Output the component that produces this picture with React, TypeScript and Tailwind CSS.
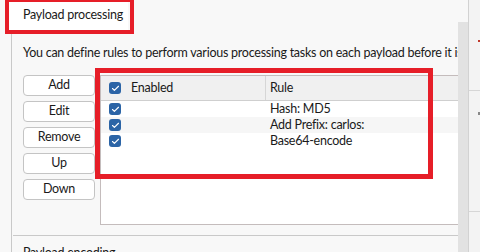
import { Check } from 'lucide-react';

const rules = ['Hash: MD5', 'Add Prefix: carlos:', 'Base64-encode'];
const actions = ['Add', 'Edit', 'Remove', 'Up', 'Down'];

function Box() {
  return (
    <span className="w-[12px] h-[12px] rounded-[3px] bg-[#2b64a6] flex items-center justify-center">
      <Check className="w-[9px] h-[9px] text-white" strokeWidth={3} />
    </span>
  );
}

export default function App() {
  return (
    <div
      className="relative w-[480px] h-[252px] overflow-hidden bg-[#f8f8f8] text-[12.5px] tracking-[-0.25px] text-[#1a1a1a]"
      style={{ fontFamily: 'Lato, "Open Sans", sans-serif' }}
    >
      <div className="flex h-full">
        {/* main settings pane */}
        <div className="w-[458px] flex flex-col overflow-hidden">
          <div className="h-[30px] ml-[9px] w-[119px] bg-white flex items-center pl-[14px] shrink-0 whitespace-nowrap">
            Payload processing
          </div>
          <div className="ml-[11px] border-l border-[#c9c9c9] flex-1 flex flex-col">
            <p className="pl-[11px] mt-[14px] leading-[18px] whitespace-nowrap">
              You can define rules to perform various processing tasks on each payload before it is used.
            </p>
            <div className="flex gap-[5px] pl-[11px] mt-[13px]">
              <div className="w-[72px] flex flex-col gap-[5px] shrink-0">
                {actions.map((a) => (
                  <button
                    key={a}
                    className="h-[21px] rounded-[4px] border border-[#c4c4c4] bg-white leading-none"
                  >
                    {a}
                  </button>
                ))}
              </div>
              <div className="w-[400px] h-[150px] border border-[#c4bcbc] bg-white shrink-0">
                <div className="h-[25px] flex bg-[#f0f0f0] border-b border-[#cfcfcf]">
                  <div className="w-[165px] flex items-center gap-[10px] pl-[8px] border-r border-[#d6d6d6]">
                    <Box />
                    <span>Enabled</span>
                  </div>
                  <div className="flex items-center pl-[4px]">Rule</div>
                </div>
                {rules.map((r, i) => (
                  <div
                    key={r}
                    className={`h-[16px] flex items-center leading-[16px] ${i % 2 === 1 ? 'bg-[#f6f6f6]' : 'bg-white'}`}
                  >
                    <div className="w-[165px] pl-[8px]">
                      <Box />
                    </div>
                    <div className="pl-[4px] whitespace-nowrap">{r}</div>
                  </div>
                ))}
              </div>
            </div>
            <div className="mt-[10px] ml-[1px] border-t border-[#c9c9c9]" />
            <p className="pl-[11px] mt-[8px] leading-[18px] whitespace-nowrap">Payload encoding</p>
          </div>
        </div>
        {/* scroll track */}
        <div className="w-[10px] mt-[22px] bg-[#e2e2e2] shrink-0" />
        {/* neighbouring panel */}
        <div className="flex-1 border-l border-[#d2d2d2] bg-[#f3f3f3] flex flex-col">
          <div className="h-[91px] border-b border-[#d6d6d6] pl-[9px] pt-[40px]">
            <div className="w-[2px] h-[2px] bg-[#c0392b]" />
          </div>
          <div className="h-[121px] border-b border-[#d6d6d6] pl-[9px] pt-[21px]">
            <div className="w-[2px] h-[3px] bg-[#888]" />
          </div>
          <div className="flex-1" />
        </div>
      </div>

      {/* annotation boxes */}
      <div className="absolute left-[5px] top-[-2px] w-[129px] h-[36px] border-[4px] border-[#e61e28]" />
      <div className="absolute left-[95px] top-[68px] w-[338px] h-[111px] border-[5px] border-[#e61e28]" />
    </div>
  );
}
